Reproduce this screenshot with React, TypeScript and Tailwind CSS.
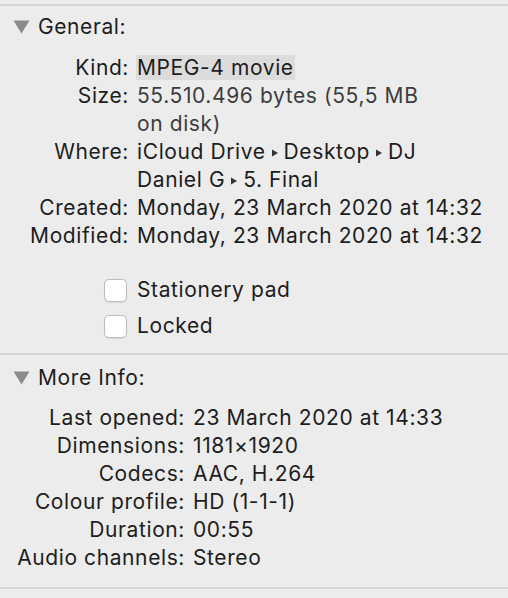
import React from "react";

const font = { fontFamily: "Inter, 'Noto Sans', sans-serif" };

function Disclosure() {
  return (
    <svg width="17" height="14" viewBox="0 0 17 14" className="shrink-0">
      <path d="M0.5 0.5 L16.5 0.5 L8.5 13.5 Z" fill="#8b8b8b" />
    </svg>
  );
}

function Crumb() {
  return (
    <svg width="12" height="10" viewBox="0 0 12 10" className="mx-[3px] inline-block align-middle">
      <path d="M3 1.5 L9 5 L3 8.5 Z" fill="#333" />
    </svg>
  );
}

function Section({ title, children }: { title: string; children: React.ReactNode }) {
  return (
    <div className="flex flex-col">
      <div className="flex h-[28px] items-center gap-[8px] pl-[13px] pt-[1px] text-[21px] tracking-[0.6px] text-[#1d1d1d]">
        <Disclosure />
        <span>{title}</span>
      </div>
      {children}
    </div>
  );
}

function Row({ label, labelW, children, muted }: { label: string; labelW: string; children: React.ReactNode; muted?: boolean }) {
  return (
    <div className="flex text-[21px] leading-[28px] tracking-[0.6px]">
      <div className={`${labelW} shrink-0 text-right text-[#1d1d1d]`}>{label}</div>
      <div className={`pl-[8px] whitespace-nowrap ${muted ? "text-[#3d3d3d]" : "text-[#1d1d1d]"}`}>{children}</div>
    </div>
  );
}

function Check({ label }: { label: string }) {
  return (
    <div className="flex h-[24px] items-center gap-[10px] pl-[104px] text-[21px] tracking-[0.6px] text-[#1d1d1d]">
      <span className="h-[23px] w-[23px] rounded-[5px] border border-[#bdbdbd] bg-white shadow-[0_0.5px_1px_rgba(0,0,0,0.08)]" />
      <span>{label}</span>
    </div>
  );
}

export default function App() {
  return (
    <div className="h-[598px] w-[508px] overflow-hidden bg-[#ececec] pt-[4px]" style={font}>
      <div className="border-t-2 border-[#d6d6d6] pt-[6px]">
        <Section title="General:">
          <div className="mt-[14px] flex flex-col">
            <Row label="Kind:" labelW="w-[129px]">
              <span className="-ml-[1px] bg-[#dcdcdc] px-[1px]">MPEG-4 movie</span>
            </Row>
            <Row label="Size:" labelW="w-[129px]" muted>
              <div>55.510.496 bytes (55,5 MB</div>
              <div>on disk)</div>
            </Row>
            <Row label="Where:" labelW="w-[129px]">
              <div>
                iCloud Drive<Crumb />Desktop<Crumb />DJ
              </div>
              <div>
                Daniel G<Crumb />5. Final
              </div>
            </Row>
            <Row label="Created:" labelW="w-[129px]">Monday, 23 March 2020 at 14:32</Row>
            <Row label="Modified:" labelW="w-[129px]">Monday, 23 March 2020 at 14:32</Row>
          </div>
          <div className="mt-[28px] flex flex-col gap-[12px]">
            <Check label="Stationery pad" />
            <Check label="Locked" />
          </div>
        </Section>
      </div>
      <div className="mt-[15px] border-t-2 border-[#d6d6d6] pt-[8px]">
        <Section title="More Info:">
          <div className="mt-[13px] flex flex-col">
            <Row label="Last opened:" labelW="w-[185px]">23 March 2020 at 14:33</Row>
            <Row label="Dimensions:" labelW="w-[185px]">1181×1920</Row>
            <Row label="Codecs:" labelW="w-[185px]">AAC, H.264</Row>
            <Row label="Colour profile:" labelW="w-[185px]">HD (1-1-1)</Row>
            <Row label="Duration:" labelW="w-[185px]">00:55</Row>
            <Row label="Audio channels:" labelW="w-[185px]">Stereo</Row>
          </div>
        </Section>
      </div>
      <div className="mt-[15px] border-t-2 border-[#d6d6d6]" />
    </div>
  );
}
